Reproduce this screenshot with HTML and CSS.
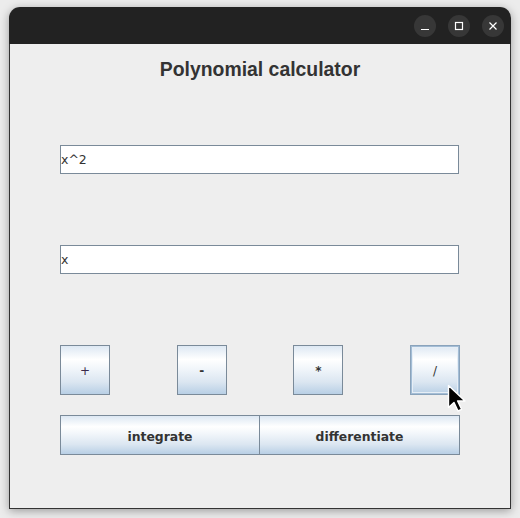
FILE: index.html
```html
<!DOCTYPE html>
<html>
<head>
<meta charset="utf-8">
<link rel="stylesheet" href="styles.css">
</head>
<body>
<div class="window">
  <div class="titlebar">
    <span class="wbtn"><svg width="22" height="22" viewBox="0 0 22 22"><path d="M7 14.5h8" stroke="#fff" stroke-width="1.2"/></svg></span>
    <span class="wbtn"><svg width="22" height="22" viewBox="0 0 22 22"><rect x="7.5" y="7.5" width="7" height="7" fill="none" stroke="#fff" stroke-width="1.2"/></svg></span>
    <span class="wbtn"><svg width="22" height="22" viewBox="0 0 22 22"><path d="M7.5 7.5l7 7M14.5 7.5l-7 7" stroke="#fff" stroke-width="1.2"/></svg></span>
  </div>
  <div class="content">
    <h1 class="title">Polynomial calculator</h1>
    <div class="field field-first">x^2</div>
    <div class="field field-second">x</div>
    <div class="ops">
      <button class="btn op">+</button>
      <button class="btn op">-</button>
      <button class="btn op">*</button>
      <button class="btn op focused">/</button>
    </div>
    <div class="actions">
      <button class="btn act">integrate</button>
      <button class="btn act">differentiate</button>
    </div>
  </div>
  <svg class="cursor" width="22" height="30" viewBox="0 0 22 30"><path d="M1.5 1.5v22l5.5-5 4 8.5 3.6-1.7-4-8.3h7.4z" fill="#000" stroke="#fff" stroke-width="1.4" stroke-linejoin="round"/></svg>
</div>
</body>
</html>
```
FILE: styles.css
```css
html, body {
  margin: 0;
  padding: 0;
}
body {
  background: #ececec;
  width: 520px;
  height: 518px;
  overflow: hidden;
  padding-top: 7px;
  box-sizing: border-box;
}
.window {
  position: relative;
  margin-left: 9px;
  width: 502px;
  height: 502px;
  border-radius: 11px 11px 0 0;
  background: #ededed;
  box-shadow: 0 2px 10px rgba(0,0,0,0.35);
  display: flex;
  flex-direction: column;
  overflow: hidden;
}
.titlebar {
  height: 37px;
  background: #222222;
  display: flex;
  justify-content: flex-end;
  align-items: center;
  gap: 12px;
  padding-right: 7px;
  flex: none;
}
.wbtn {
  width: 22px;
  height: 22px;
  border-radius: 50%;
  background: #373737;
  display: flex;
}
.content {
  flex: 1;
  border: 1px solid #333;
  border-top: none;
  background: #eeeeee;
  display: flex;
  flex-direction: column;
  padding: 0 50px;
}
.title {
  margin: 13px 0 0;
  font-family: "Liberation Sans", Arial, sans-serif;
  font-weight: bold;
  font-size: 19.4px;
  line-height: 24px;
  color: #333;
  text-align: center;
}
.field {
  width: 399px;
  height: 29px;
  box-sizing: border-box;
  border: 1px solid #7a8a99;
  background: #fff;
  font-family: "DejaVu Sans", sans-serif;
  font-size: 12.5px;
  color: #333;
  line-height: 27px;
  padding-left: 0;
}
.field-first { margin-top: 64px; }
.field-second { margin-top: 71px; }
.ops {
  margin-top: 71px;
  width: 400px;
  display: flex;
  justify-content: space-between;
}
.btn {
  box-sizing: border-box;
  border: 1px solid #7a8a99;
  background: linear-gradient(to bottom, #dde8f3 0%, #ffffff 28%, #f3f7fb 45%, #dbe6f1 75%, #b8cfe5 100%);
  font-family: "DejaVu Sans", sans-serif;
  font-weight: bold;
  font-size: 12px;
  color: #333;
  padding: 2px 0 0;
  margin: 0;
}
.op {
  width: 50px;
  height: 50px;
}
.op:first-child {
  font-weight: normal;
  color: #3a2a4a;
}
.focused {
  box-shadow: inset 0 0 0 1px #a3bdd6, inset 0 0 0 2px #e6eef6;
  border-color: #8aa3bb;
  font-weight: normal;
}
.actions {
  margin-top: 20px;
  display: flex;
  width: 400px;
}
.act {
  width: 200px;
  height: 40px;
  font-size: 12.4px;
}
.act + .act {
  margin-left: -1px;
  width: 201px;
}
.cursor {
  position: absolute;
  left: 438px;
  top: 377px;
}
```
